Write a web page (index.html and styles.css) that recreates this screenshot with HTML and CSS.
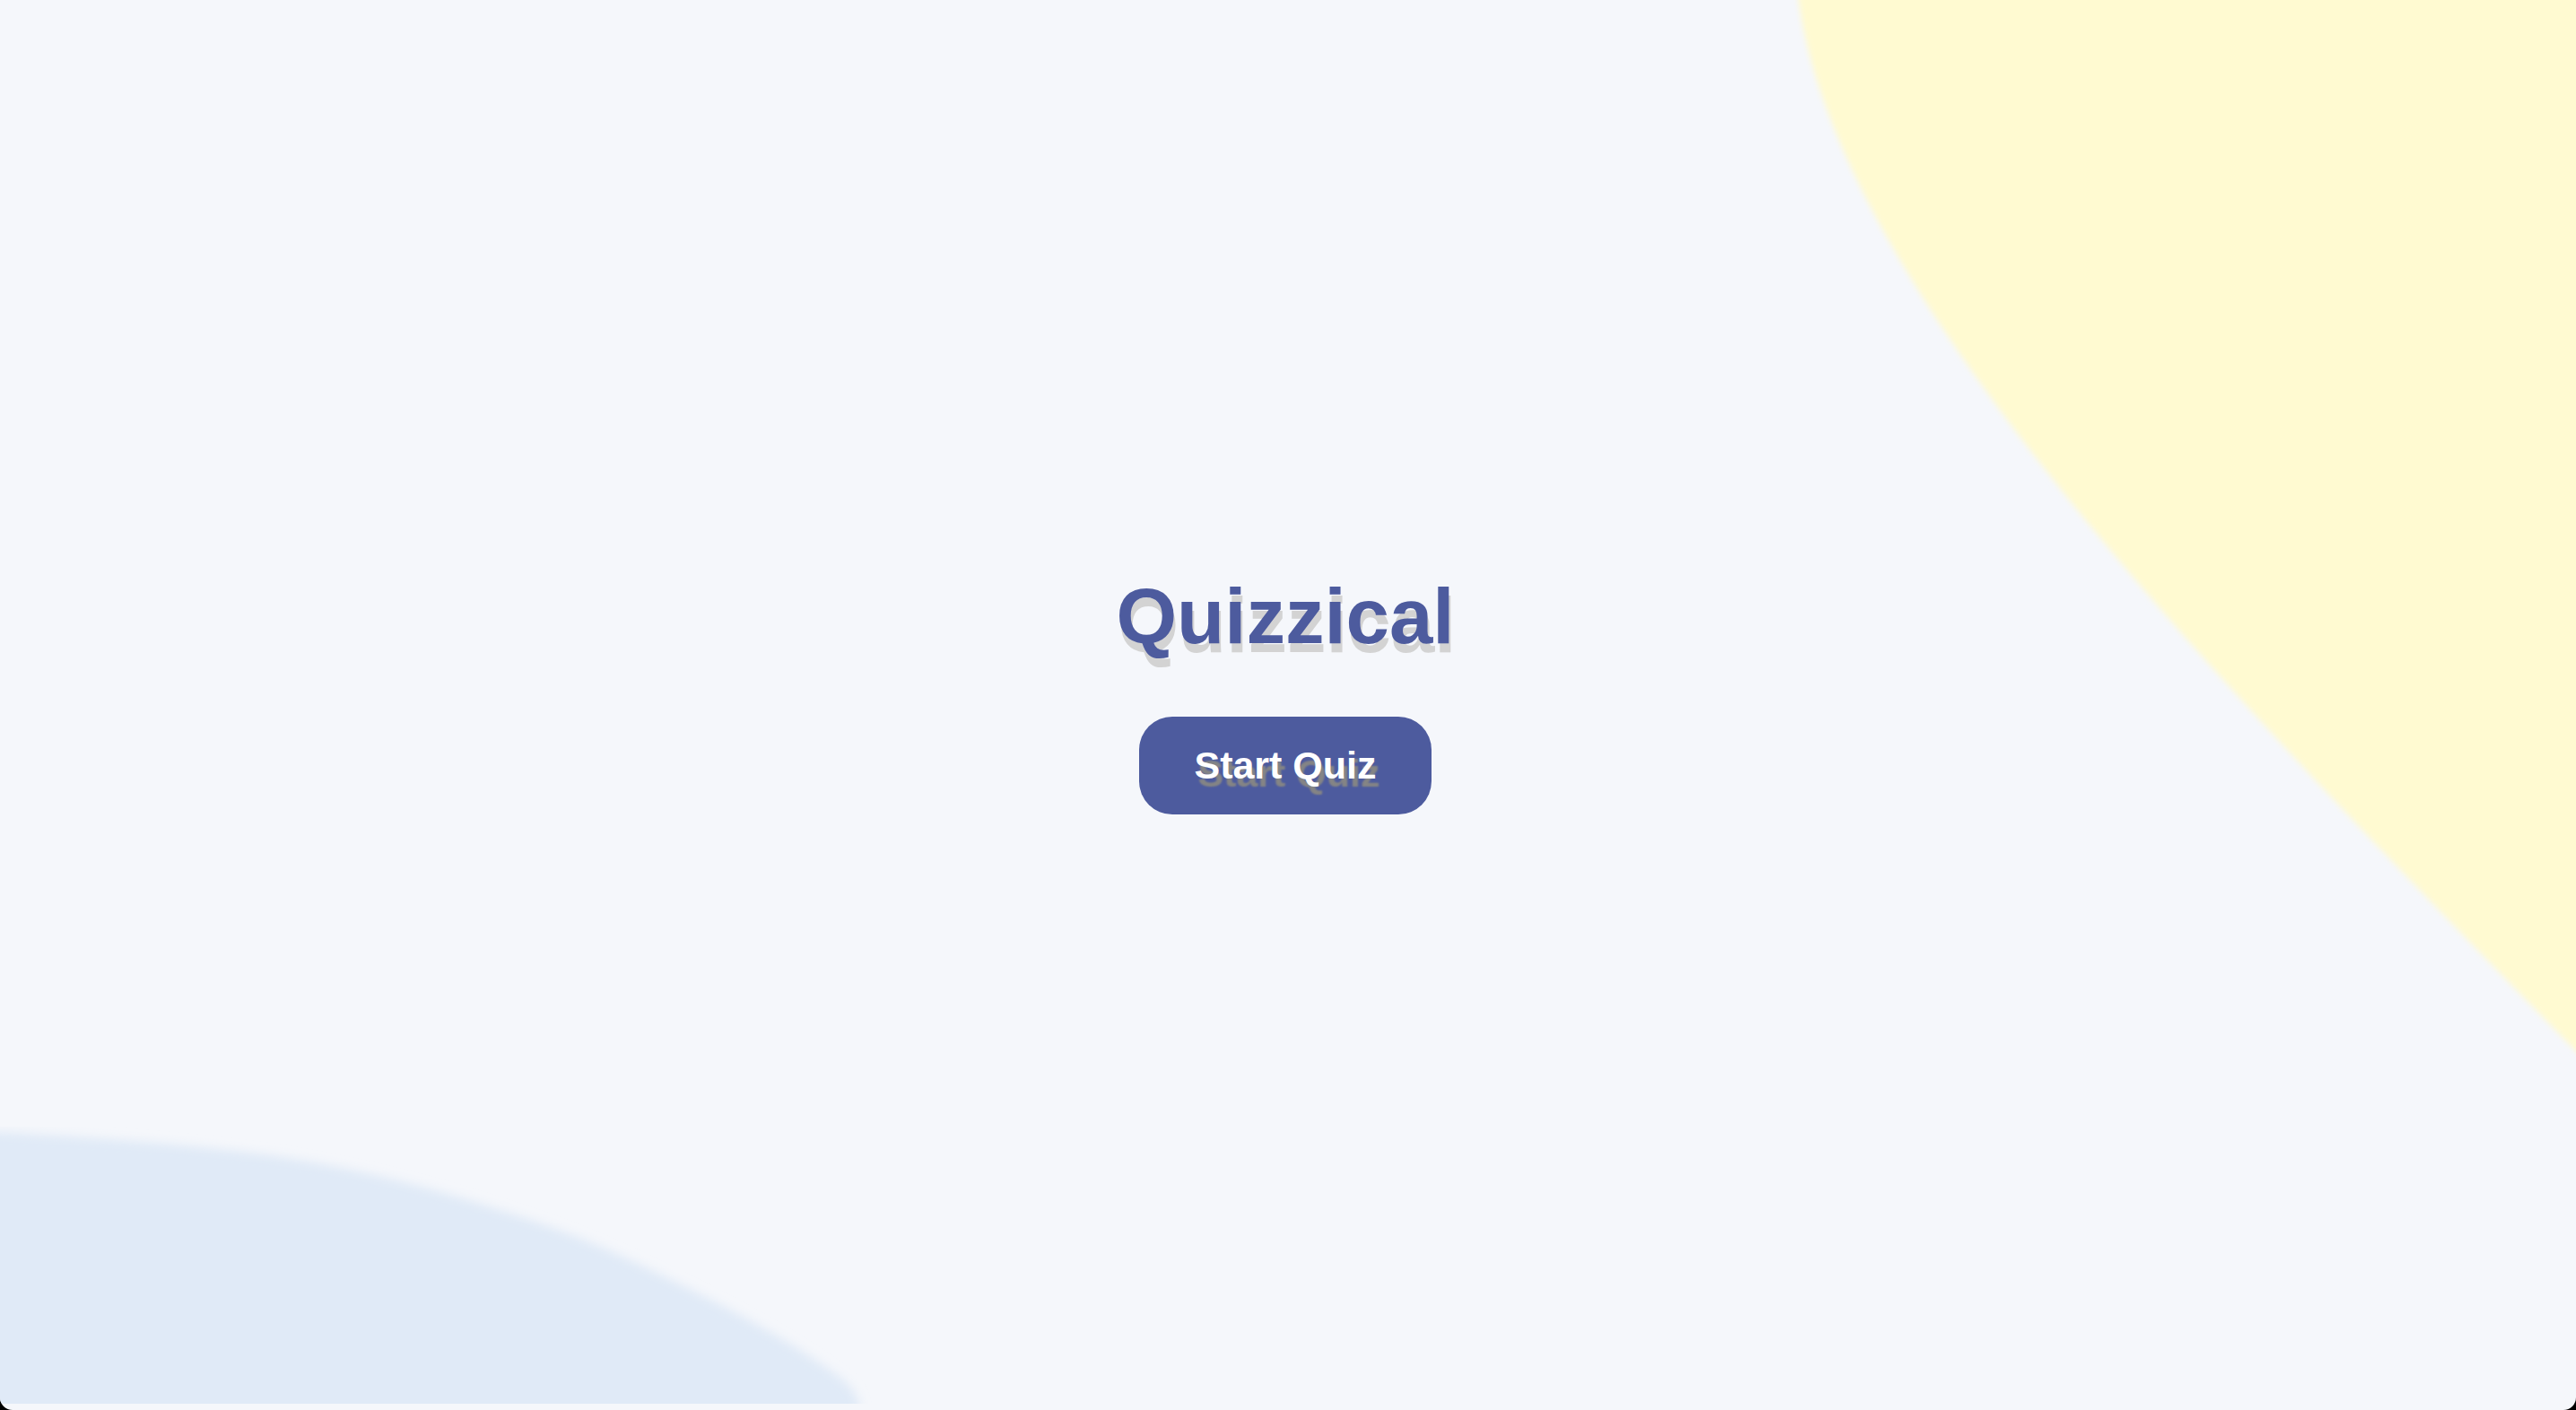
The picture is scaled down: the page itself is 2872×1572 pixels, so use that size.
FILE: index.html
```html
<!DOCTYPE html>
<html lang="en">
<head>
<meta charset="utf-8">
<title>Quizzical</title>
<link rel="stylesheet" href="styles.css">
</head>
<body>
<div class="page">
  <svg class="blobs" viewBox="0 0 2872 1572" preserveAspectRatio="none" aria-hidden="true">
    <defs>
      <filter id="blurY" filterUnits="userSpaceOnUse" x="-200" y="-200" width="3300" height="2000">
        <feGaussianBlur stdDeviation="3"/>
      </filter>
      <filter id="blurB" filterUnits="userSpaceOnUse" x="-200" y="-200" width="3300" height="2000">
        <feGaussianBlur stdDeviation="6"/>
      </filter>
      <clipPath id="clipB">
        <rect x="-60" y="1256" width="1200" height="309"/>
      </clipPath>
    </defs>
    <path class="blob-yellow" filter="url(#blurY)" d="M1995,-60 L2005,0 C2050,330 2480,770 2872,1172 L2960,1262 L2960,-60 Z"/>
    <g clip-path="url(#clipB)">
      <path class="blob-blue" filter="url(#blurB)" d="M-60,1262 L0,1262 C88.8,1267.2 233,1276.2 333,1293 C433,1309.8 522.2,1336.3 600,1363 C677.8,1389.7 744.5,1424.7 800,1453 C855.5,1481.3 904.7,1511.8 933,1533 C961.3,1554.2 955,1562 962,1580 L990,1650 L-60,1650 Z"/>
    </g>
  </svg>
  <main class="intro">
    <h1 class="title">Quizzical</h1>
    <button class="start-btn" type="button">Start Quiz</button>
  </main>
</div>
</body>
</html>
```

FILE: styles.css
```css
html, body {
  margin: 0;
  padding: 0;
  height: 100%;
  background: #000;
}

.page {
  position: relative;
  height: 100vh;
  background: #f5f7fb;
  border-radius: 0 0 14px 14px;
  overflow: hidden;
  font-family: "Liberation Sans", Arial, sans-serif;
}

.blobs {
  position: absolute;
  inset: 0;
  width: 100%;
  height: 100%;
  z-index: 0;
}

.blob-yellow {
  fill: #fffad1;
}

.blob-blue {
  fill: #e0eaf7;
}

.intro {
  position: relative;
  z-index: 1;
  height: 100%;
  box-sizing: border-box;
  padding-bottom: 27px;
  padding-right: 6px;
  display: flex;
  flex-direction: column;
  align-items: center;
  justify-content: center;
}

.title {
  margin: 0;
  font-size: 87px;
  font-weight: 700;
  line-height: normal;
  color: #4d5b9e;
  text-shadow: 2px 10px 0 #d3d3d3;
}

.start-btn {
  margin-top: 62px;
  padding: 30px 61px;
  border: none;
  border-radius: 37px;
  background: #4d5b9e;
  color: #fff;
  font-family: "Liberation Sans", Arial, sans-serif;
  font-size: 43px;
  font-weight: 700;
  line-height: normal;
  text-shadow: 4px 9px 2px #858585;
  cursor: pointer;
}
```
